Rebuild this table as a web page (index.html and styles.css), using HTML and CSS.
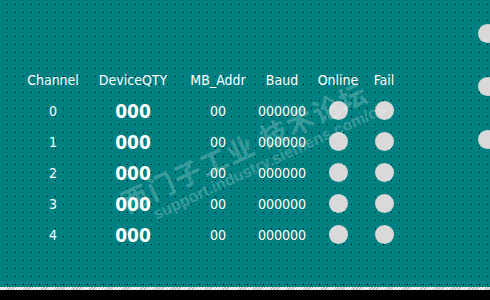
FILE: index.html
```html
<!DOCTYPE html>
<html>
<head>
<meta charset="utf-8">
<link rel="stylesheet" href="styles.css">
</head>
<body>
<div class="screen">
  <div class="panel">
    <div class="table">
      <div class="hd">Channel</div>
      <div class="hd">DeviceQTY</div>
      <div class="hd">MB_Addr</div>
      <div class="hd">Baud</div>
      <div class="hd">Online</div>
      <div class="hd">Fail</div>

      <div class="cell">0</div>
      <div class="cell qty">000</div>
      <div class="cell">00</div>
      <div class="cell">000000</div>
      <div class="cell"><span class="led"></span></div>
      <div class="cell"><span class="led"></span></div>

      <div class="cell">1</div>
      <div class="cell qty">000</div>
      <div class="cell">00</div>
      <div class="cell">000000</div>
      <div class="cell"><span class="led"></span></div>
      <div class="cell"><span class="led"></span></div>

      <div class="cell">2</div>
      <div class="cell qty">000</div>
      <div class="cell">00</div>
      <div class="cell">000000</div>
      <div class="cell"><span class="led"></span></div>
      <div class="cell"><span class="led"></span></div>

      <div class="cell">3</div>
      <div class="cell qty">000</div>
      <div class="cell">00</div>
      <div class="cell">000000</div>
      <div class="cell"><span class="led"></span></div>
      <div class="cell"><span class="led"></span></div>

      <div class="cell">4</div>
      <div class="cell qty">000</div>
      <div class="cell">00</div>
      <div class="cell">000000</div>
      <div class="cell"><span class="led"></span></div>
      <div class="cell"><span class="led"></span></div>
    </div>
    <div class="side">
      <span class="led"></span>
      <span class="led"></span>
      <span class="led"></span>
    </div>
  </div>
  <div class="edge"></div>
  <div class="bottom"></div>
  <div class="watermark">
    <div class="wm-cn">西门子工业 技术论坛</div>
    <div class="wm-en">support.industry.siemens.com/cs</div>
  </div>
</div>
</body>
</html>
```
FILE: styles.css
```css
html, body {
  margin: 0;
  padding: 0;
  width: 490px;
  height: 300px;
  overflow: hidden;
  background: #000;
}

.screen {
  position: relative;
  width: 490px;
  height: 300px;
  display: flex;
  flex-direction: column;
  overflow: hidden;
  font-family: "DejaVu Sans Condensed", "DejaVu Sans", sans-serif;
  color: #fff;
}

.panel {
  height: 287px;
  display: flex;
  justify-content: space-between;
  background-color: #000;
  background-image:
    linear-gradient(to bottom, #008080 0 4px, transparent 4px 5px, #008080 5px 8px),
    linear-gradient(to right, #008080 0 7px, transparent 7px 8px);
  background-size: 8px 8px, 8px 8px;
}

.table {
  display: grid;
  grid-template-columns: 66px 94px 76px 52px 60px 32px;
  grid-auto-rows: 31px;
  padding-top: 64px;
  padding-left: 20px;
  align-content: start;
}

.hd, .cell {
  display: flex;
  align-items: center;
  justify-content: center;
  font-size: 14px;
  white-space: nowrap;
}

.qty {
  font-size: 19px;
  font-weight: bold;
}

.led {
  display: block;
  width: 19px;
  height: 19px;
  border-radius: 50%;
  background: #d9d9d9;
}

.side {
  display: flex;
  flex-direction: column;
  gap: 34px;
  padding-top: 24px;
  margin-right: -7px;
}

.edge {
  height: 3px;
  background-color: #c8c8c8;
  background-image: repeating-linear-gradient(135deg, #fff 0 1px, #bdbdbd 1px 2px);
}

.bottom {
  flex: 1;
  background: #000;
}

.watermark {
  position: absolute;
  left: 116px;
  top: 190px;
  transform: rotate(-25deg);
  transform-origin: left top;
  color: rgba(255, 255, 255, 0.24);
  pointer-events: none;
}

.wm-cn {
  font-family: "Noto Sans CJK SC", sans-serif;
  font-size: 27px;
  font-weight: bold;
  letter-spacing: 2px;
  line-height: 30px;
  white-space: nowrap;
}

.wm-en {
  font-family: "Liberation Sans", sans-serif;
  font-size: 16px;
  font-weight: bold;
  line-height: 17px;
  padding-left: 24px;
  white-space: nowrap;
}
```
